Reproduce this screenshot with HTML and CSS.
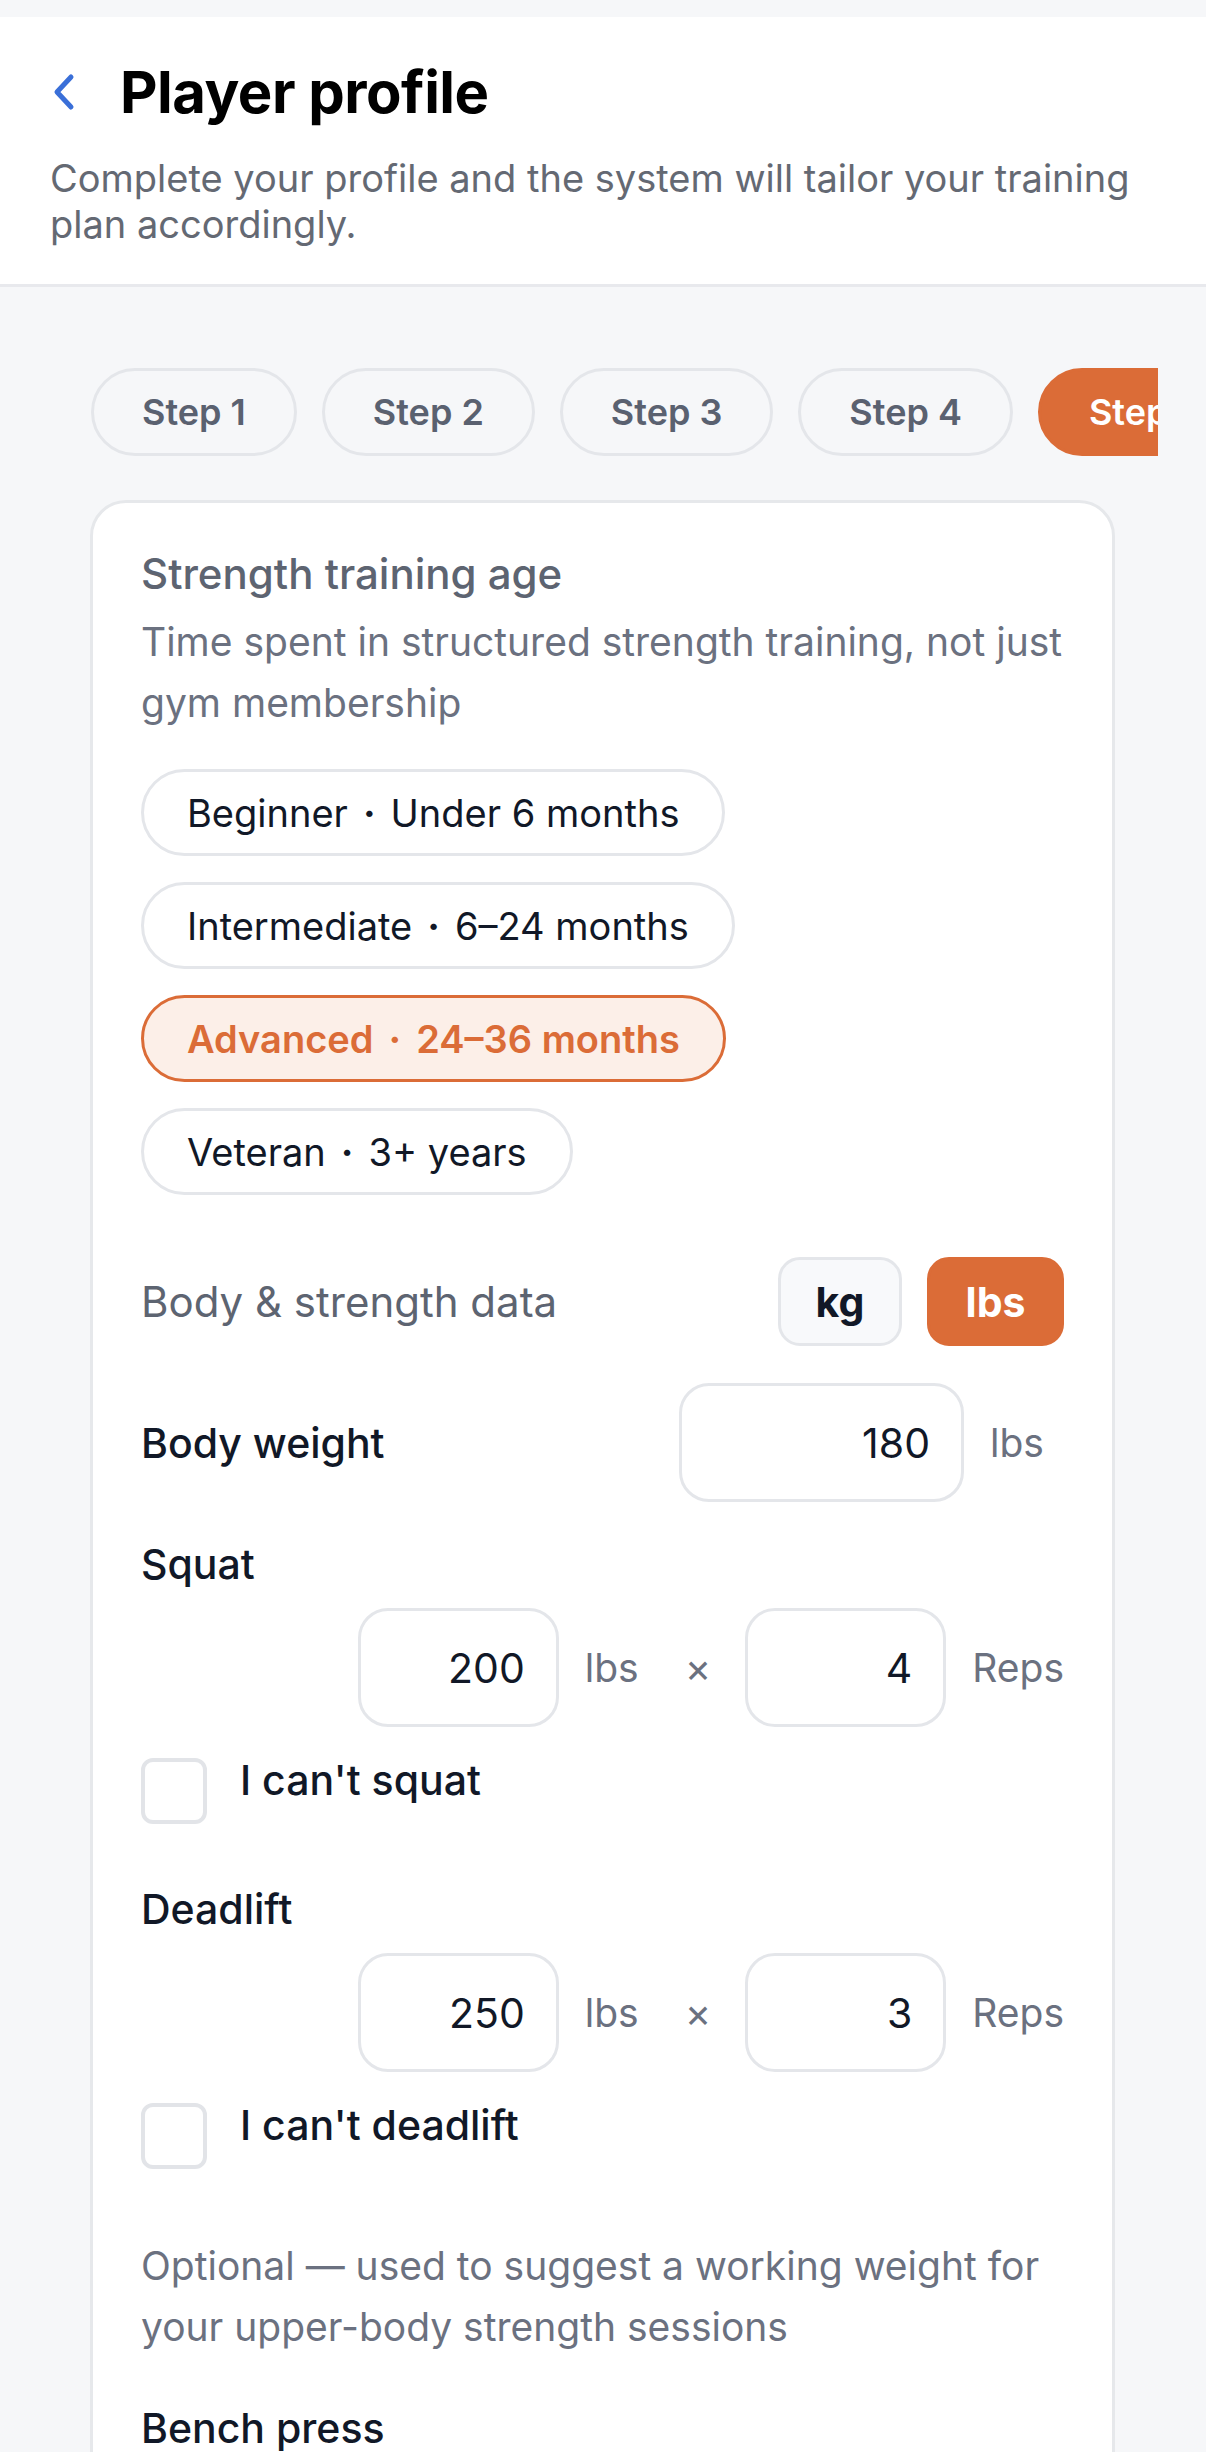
FILE: index.html
```html
<!DOCTYPE html>
<html lang="en">
<head>
    <meta charset="UTF-8">
    <meta name="viewport" content="width=device-width, initial-scale=1.0">
    <title>Player profile</title>
    <link rel="stylesheet" href="styles.css">
</head>
<body>

    <div class="header">
        <div class="title-row">
            <svg class="back" width="26" height="38" viewBox="0 0 26 38">
                <path d="M20 4 L6 19 L20 34" fill="none" stroke="#3a6fd8" stroke-width="5" stroke-linecap="round" stroke-linejoin="round"/>
            </svg>
            <h1 class="title">Player profile</h1>
        </div>
        <p class="subtitle">Complete your profile and the system will tailor your training plan accordingly.</p>
    </div>

    <div class="steps">
        <div class="step">Step 1</div>
        <div class="step">Step 2</div>
        <div class="step">Step 3</div>
        <div class="step">Step 4</div>
        <div class="step step-active">Step 5</div>
    </div>

    <div class="card">
        <div class="section-title">Strength training age</div>
        <p class="hint hint-top">Time spent in structured strength training, not just gym membership</p>

        <div class="options">
            <div class="option">Beginner<span class="dot">·</span>Under 6 months</div>
            <div class="option">Intermediate<span class="dot">·</span>6–24 months</div>
            <div class="option option-active">Advanced<span class="dot">·</span>24–36 months</div>
            <div class="option">Veteran<span class="dot">·</span>3+ years</div>
        </div>

        <div class="data-head">
            <div class="data-title">Body &amp; strength data</div>
            <div class="unit-toggle">
                <div class="unit-btn">kg</div>
                <div class="unit-btn unit-btn-active">lbs</div>
            </div>
        </div>

        <div class="weight-row">
            <div class="label">Body weight</div>
            <div class="box box-wide">180</div>
            <div class="unit">lbs</div>
        </div>

        <div class="lift">
            <div class="label">Squat</div>
            <div class="lift-row">
                <div class="box">200</div>
                <div class="unit">lbs</div>
                <div class="times">×</div>
                <div class="box">4</div>
                <div class="unit">Reps</div>
            </div>
            <div class="check">
                <div class="check-box"></div>
                <div class="check-label">I can't squat</div>
            </div>
        </div>

        <div class="lift">
            <div class="label">Deadlift</div>
            <div class="lift-row">
                <div class="box">250</div>
                <div class="unit">lbs</div>
                <div class="times">×</div>
                <div class="box">3</div>
                <div class="unit">Reps</div>
            </div>
            <div class="check">
                <div class="check-box"></div>
                <div class="check-label">I can't deadlift</div>
            </div>
        </div>

        <p class="hint optional">Optional — used to suggest a working weight for your upper-body strength sessions</p>

        <div class="label bench">Bench press</div>
    </div>

</body>
</html>
```

FILE: styles.css
```css
/* Basic Reset */
* {
    margin: 0;
    padding: 0;
    box-sizing: border-box;
}

body {
    font-family: Inter, "Noto Sans", sans-serif;
    background-color: #f6f7f9;
    color: #111827;
    padding-top: 17px;
    height: 2452px;
    overflow: hidden;
}

/* Header */
.header {
    background-color: #fff;
    border-bottom: 3px solid #e8e9ed;
    padding: 40px 50px 37px;
}

.title-row {
    display: flex;
    align-items: center;
    gap: 43px;
    height: 70px;
}

.back {
    margin-left: 1px;
}

.title {
    font-size: 58px;
    font-weight: 700;
    line-height: 70px;
    color: #000;
    letter-spacing: -0.5px;
}

.subtitle {
    margin-top: 28px;
    font-size: 38px;
    line-height: 46px;
    color: #646973;
}

/* Steps */
.steps {
    display: flex;
    gap: 25px;
    margin: 81px 0 0 91px;
    width: 1067px;
    overflow: hidden;
}

.step {
    flex-shrink: 0;
    height: 88px;
    padding: 0 48px;
    border: 3px solid #e4e6ea;
    border-radius: 44px;
    display: flex;
    align-items: center;
    font-size: 36px;
    font-weight: 600;
    color: #5a6170;
}

.step-active {
    background-color: #db6c37;
    border-color: #db6c37;
    color: #fff;
}

/* Card */
.card {
    margin: 44px 91px 0 90px;
    background-color: #fff;
    border: 3px solid #e6e8eb;
    border-radius: 36px;
    padding: 43px 48px 60px;
}

.section-title {
    font-size: 42px;
    font-weight: 500;
    line-height: 56px;
    color: #5d6471;
}

.hint {
    font-size: 39px;
    line-height: 61px;
    color: #6b7180;
}

.hint-top {
    margin-top: 9px;
}

/* Options */
.options {
    display: flex;
    flex-direction: column;
    align-items: flex-start;
    gap: 26px;
    margin-top: 36px;
}

.option {
    height: 87px;
    padding: 0 43px;
    border: 3px solid #e4e6ea;
    border-radius: 44px;
    display: flex;
    align-items: center;
    font-size: 38px;
    color: #111827;
}

.dot {
    margin: 0 15px;
    font-weight: 700;
}

.option-active {
    background-color: #fcefe8;
    border-color: #db6c37;
    color: #db6c37;
    font-weight: 600;
}

/* Body data */
.data-head {
    display: flex;
    align-items: center;
    justify-content: space-between;
    margin-top: 62px;
}

.data-title {
    font-size: 42px;
    color: #5d6471;
}

.unit-toggle {
    display: flex;
    gap: 25px;
}

.unit-btn {
    height: 89px;
    min-width: 124px;
    padding: 0 30px;
    border: 3px solid #e4e6ea;
    border-radius: 22px;
    background-color: #f8f9fb;
    display: flex;
    align-items: center;
    justify-content: center;
    font-size: 41px;
    font-weight: 700;
    color: #111827;
}

.unit-btn-active {
    min-width: 137px;
    background-color: #db6c37;
    border-color: #db6c37;
    color: #fff;
}

.label {
    font-size: 41px;
    font-weight: 500;
    line-height: 50px;
    color: #111827;
}

.weight-row {
    display: flex;
    align-items: center;
    gap: 26px;
    margin-top: 37px;
}

.weight-row .label {
    flex: 1;
}

.box {
    width: 201px;
    height: 119px;
    border: 3px solid #e4e6ea;
    border-radius: 30px;
    display: flex;
    align-items: center;
    justify-content: flex-end;
    padding-right: 31px;
    font-size: 41px;
    color: #111827;
}

.box-wide {
    width: 285px;
}

.unit {
    min-width: 74px;
    font-size: 39px;
    color: #6b7180;
}

.times {
    margin-right: 8px;
    font-size: 40px;
    color: #6b7180;
}

/* Lifts */
.lift {
    margin-top: 37px;
}

.lift + .lift {
    margin-top: 60px;
}

.lift-row {
    display: flex;
    align-items: center;
    justify-content: flex-end;
    gap: 26px;
    margin-top: 19px;
}

.check {
    display: flex;
    align-items: flex-start;
    gap: 33px;
    margin-top: 28px;
}

.check-box {
    width: 66px;
    height: 66px;
    border: 4px solid #e2e4e8;
    border-radius: 12px;
    margin-top: 3px;
}

.check-label {
    font-size: 41px;
    font-weight: 500;
    line-height: 50px;
}

.optional {
    margin-top: 66px;
}

.bench {
    margin-top: 46px;
}
```
